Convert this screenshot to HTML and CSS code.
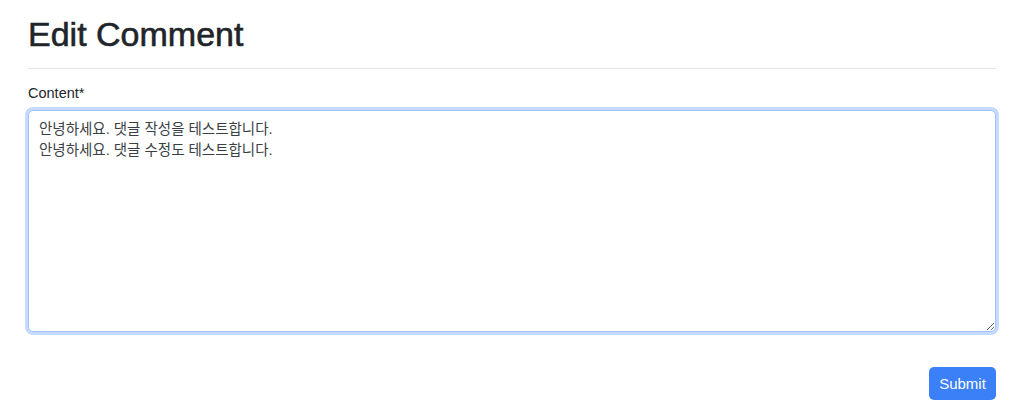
FILE: index.html
```html
<!DOCTYPE html>
<html lang="ko">
<head>
    <meta charset="UTF-8">
    <meta name="viewport" content="width=device-width, initial-scale=1.0">
    <title>Edit Comment</title>
    <link rel="stylesheet" href="styles.css">
</head>
<body>
    <div class="container">
        <h1>Edit Comment</h1>
        <hr>
        <form class="comment-form" onsubmit="return false;">
            <label for="content">Content*</label>
            <textarea id="content" autofocus>안녕하세요. 댓글 작성을 테스트합니다.
안녕하세요. 댓글 수정도 테스트합니다.</textarea>
            <div class="actions">
                <button type="submit">Submit</button>
            </div>
        </form>
    </div>
</body>
</html>
```

FILE: styles.css
```css
body {
    margin: 0;
    font-family: "Liberation Sans", "Noto Sans CJK KR", Arial, sans-serif;
    color: #212529;
    background: #fff;
}
.container {
    padding: 0 28px;
}
h1 {
    margin: 14px 0 0;
    font-size: 34px;
    line-height: 41px;
    font-weight: 500;
    -webkit-text-stroke: 0.6px #212529;
}
hr {
    margin: 13px 0 0;
    border: none;
    border-top: 1px solid #e3e5e8;
}
.comment-form label {
    display: block;
    margin-top: 14px;
    font-size: 14.5px;
    line-height: 21px;
}
.comment-form textarea {
    display: block;
    box-sizing: border-box;
    width: 100%;
    height: 222px;
    margin-top: 6px;
    padding: 8px 10px;
    font-family: "Liberation Sans", "Noto Sans CJK KR", sans-serif;
    font-size: 14.5px;
    line-height: 21px;
    color: #3a3f44;
    border: 1px solid #9fc2fb;
    border-radius: 5px;
    box-shadow: 0 0 0 3px #c6dafc;
    outline: none;
    resize: vertical;
}
.actions {
    display: flex;
    justify-content: flex-end;
    margin-top: 35px;
}
.actions button {
    width: 67px;
    height: 33px;
    padding: 0;
    background-color: #3b80f6;
    color: white;
    border: none;
    border-radius: 5px;
    font-family: "Liberation Sans", Arial, sans-serif;
    font-size: 15px;
    cursor: pointer;
}
```
